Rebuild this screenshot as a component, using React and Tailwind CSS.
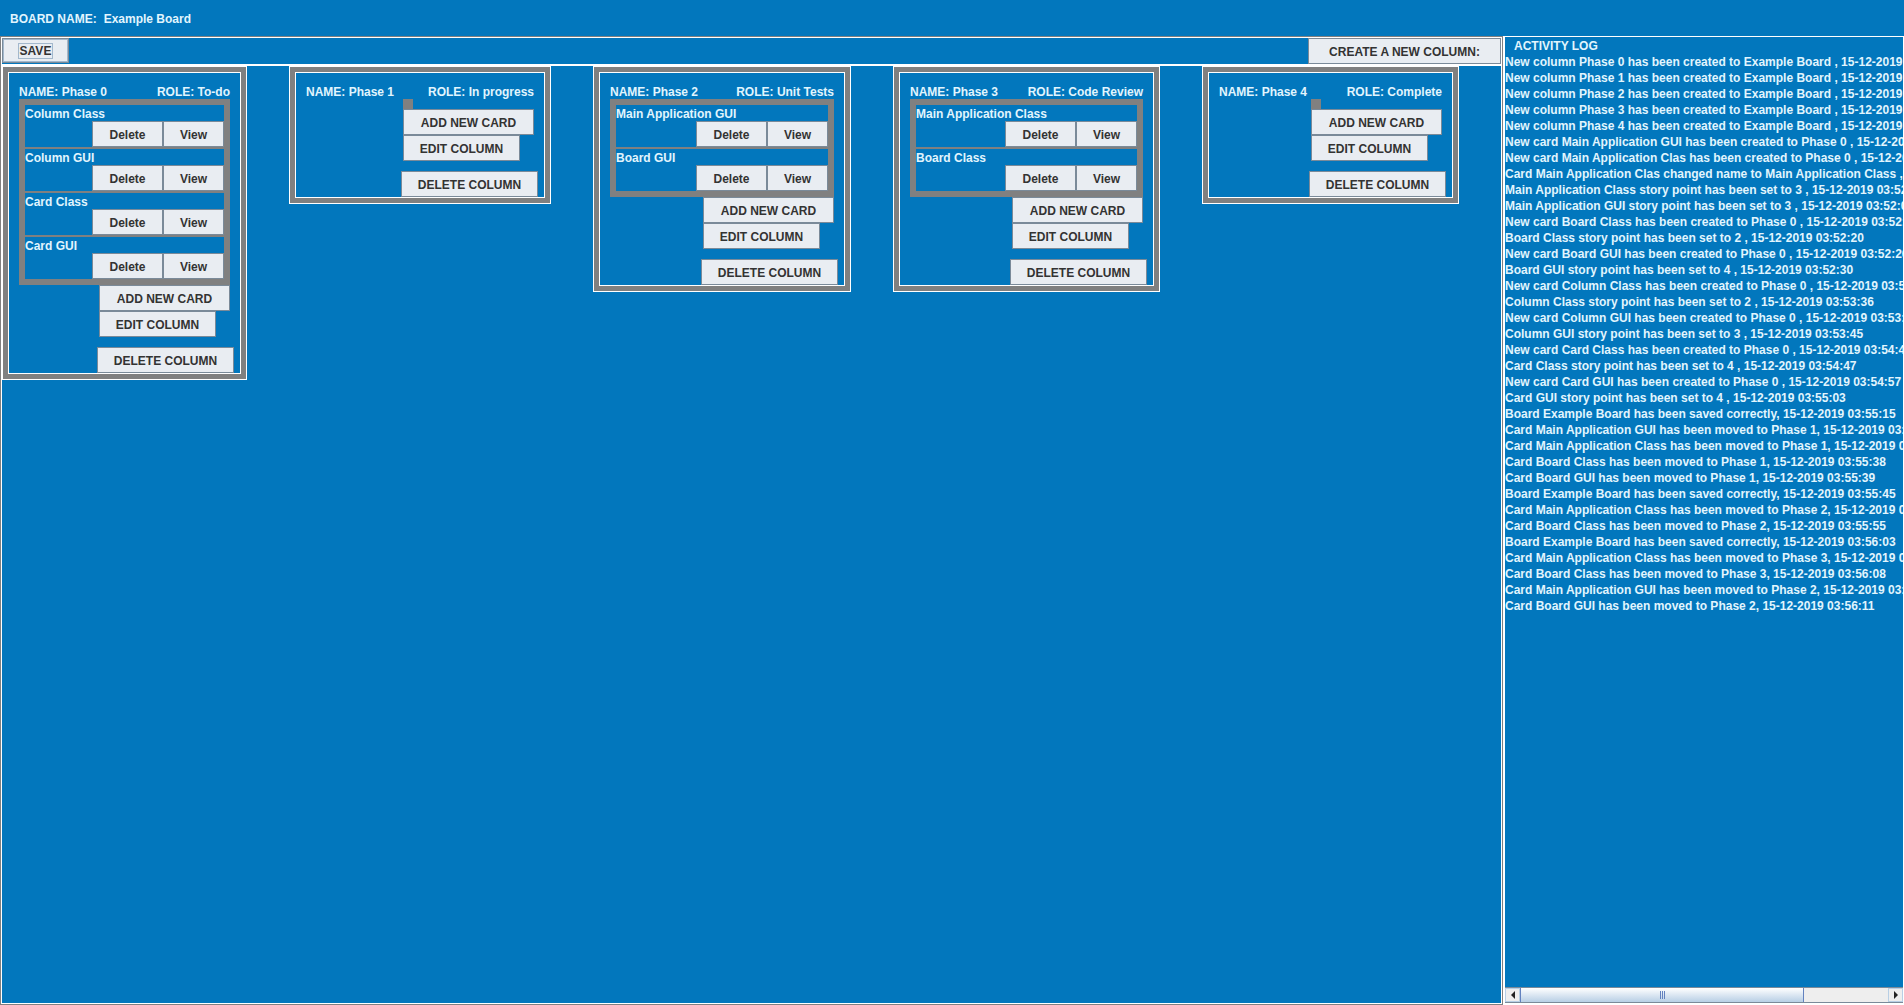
const FONT = "font-['Liberation_Sans',Arial,sans-serif]";

const columns = [
  { name: 'Phase 0', role: 'To-do', width: 'w-[245px]', cards: ['Column Class', 'Column GUI', 'Card Class', 'Card GUI'] },
  { name: 'Phase 1', role: 'In progress', width: 'w-[262px]', cards: [] },
  { name: 'Phase 2', role: 'Unit Tests', width: 'w-[258px]', cards: ['Main Application GUI', 'Board GUI'] },
  { name: 'Phase 3', role: 'Code Review', width: 'w-[267px]', cards: ['Main Application Class', 'Board Class'] },
  { name: 'Phase 4', role: 'Complete', width: 'w-[257px]', cards: [] },
];

const log = [
  'New column Phase 0 has been created to Example Board , 15-12-2019 03:50:12',
  'New column Phase 1 has been created to Example Board , 15-12-2019 03:50:24',
  'New column Phase 2 has been created to Example Board , 15-12-2019 03:50:41',
  'New column Phase 3 has been created to Example Board , 15-12-2019 03:50:58',
  'New column Phase 4 has been created to Example Board , 15-12-2019 03:51:10',
  'New card Main Application GUI has been created to Phase 0 , 15-12-2019 03:51:25',
  'New card Main Application Clas has been created to Phase 0 , 15-12-2019 03:51:40',
  'Card Main Application Clas changed name to Main Application Class , 15-12-2019 03:51:52',
  'Main Application Class story point has been set to 3 , 15-12-2019 03:52:01',
  'Main Application GUI story point has been set to 3 , 15-12-2019 03:52:07',
  'New card Board Class has been created to Phase 0 , 15-12-2019 03:52:16',
  'Board Class story point has been set to 2 , 15-12-2019 03:52:20',
  'New card Board GUI has been created to Phase 0 , 15-12-2019 03:52:26',
  'Board GUI story point has been set to 4 , 15-12-2019 03:52:30',
  'New card Column Class has been created to Phase 0 , 15-12-2019 03:53:30',
  'Column Class story point has been set to 2 , 15-12-2019 03:53:36',
  'New card Column GUI has been created to Phase 0 , 15-12-2019 03:53:41',
  'Column GUI story point has been set to 3 , 15-12-2019 03:53:45',
  'New card Card Class has been created to Phase 0 , 15-12-2019 03:54:42',
  'Card Class story point has been set to 4 , 15-12-2019 03:54:47',
  'New card Card GUI has been created to Phase 0 , 15-12-2019 03:54:57',
  'Card GUI story point has been set to 4 , 15-12-2019 03:55:03',
  'Board Example Board has been saved correctly, 15-12-2019 03:55:15',
  'Card Main Application GUI has been moved to Phase 1, 15-12-2019 03:55:34',
  'Card Main Application Class has been moved to Phase 1, 15-12-2019 03:55:36',
  'Card Board Class has been moved to Phase 1, 15-12-2019 03:55:38',
  'Card Board GUI has been moved to Phase 1, 15-12-2019 03:55:39',
  'Board Example Board has been saved correctly, 15-12-2019 03:55:45',
  'Card Main Application Class has been moved to Phase 2, 15-12-2019 03:55:53',
  'Card Board Class has been moved to Phase 2, 15-12-2019 03:55:55',
  'Board Example Board has been saved correctly, 15-12-2019 03:56:03',
  'Card Main Application Class has been moved to Phase 3, 15-12-2019 03:56:06',
  'Card Board Class has been moved to Phase 3, 15-12-2019 03:56:08',
  'Card Main Application GUI has been moved to Phase 2, 15-12-2019 03:56:10',
  'Card Board GUI has been moved to Phase 2, 15-12-2019 03:56:11',
];

function Button({ className, children }) {
  return (
    <button
      type="button"
      className={`h-[26px] shrink-0 whitespace-nowrap border border-[#7a8a99] bg-[#e9edf2] pt-[2px] text-center text-[#333333] ${className}`}
    >
      {children}
    </button>
  );
}

function Card({ title }) {
  return (
    <article className="bg-[#0277bd]">
      <h3 className="h-4 leading-[18px]">{title}</h3>
      <div className="flex justify-end">
        <Button className="w-[71px]">Delete</Button>
        <Button className="w-[61px]">View</Button>
      </div>
    </article>
  );
}

function Column({ column }) {
  return (
    <section className={`shrink-0 border border-white bg-[#808080] p-[5px] ${column.width}`}>
      <div className="border border-white bg-[#0277bd] px-[10px] pt-[10px]">
        <header className="flex h-4 justify-between leading-[18px] whitespace-nowrap">
          <h2>NAME: {column.name}</h2>
          <span>ROLE: {column.role}</span>
        </header>
        {column.cards.length > 0 && (
          <div className="flex flex-col gap-[2px] bg-[#808080] p-[6px]">
            {column.cards.map((title) => (
              <Card key={title} title={title} />
            ))}
          </div>
        )}
        <div className="ml-auto flex w-[131px] flex-col items-start">
          {column.cards.length === 0 && <div className="size-[10px] bg-[#808080]" />}
          <Button className="w-[131px]">ADD NEW CARD</Button>
          <Button className="w-[117px]">EDIT COLUMN</Button>
          <Button className="-ml-[2px] mt-[10px] w-[137px]">DELETE COLUMN</Button>
        </div>
      </div>
    </section>
  );
}

function ScrollArrow({ label, points }) {
  return (
    <button type="button" aria-label={label} className="flex w-[15px] shrink-0 items-center justify-center border border-[#b8cfe5] bg-[#eeeeee]">
      <svg viewBox="0 0 4 8" className="h-2 w-1" fill="#222222">
        <polygon points={points} />
      </svg>
    </button>
  );
}

export default function App() {
  return (
    <div className={`flex h-screen flex-col overflow-hidden bg-[#0277bd] text-[12px] leading-[16px] font-bold text-[#e1f5fe] ${FONT}`}>
      <header className="flex h-9 shrink-0 items-center gap-[7px] px-[10px] pt-[2px] whitespace-nowrap">
        <span>BOARD NAME:</span>
        <h1>Example Board</h1>
      </header>
      <div className="flex min-h-0 flex-1">
        <main className="flex min-w-0 flex-1 flex-col border border-[#808080]">
          <div className="flex min-h-0 flex-1 flex-col border border-white">
            <div className="flex shrink-0 items-start justify-between border-b-2 border-white">
              <button type="button" className="h-[25px] w-[67px] border border-[#7a8a99] bg-[#e9edf2] text-[#333333] inset-ring inset-ring-[#a3b8cc]">
                <span className="border border-[#a3b8cc] px-px">SAVE</span>
              </button>
              <Button className="w-[193px]">CREATE A NEW COLUMN:</Button>
            </div>
            <div className="flex min-h-0 flex-1 items-start gap-[42px] overflow-hidden">
              {columns.map((column) => (
                <Column key={column.name} column={column} />
              ))}
            </div>
          </div>
        </main>
        <aside className="flex w-[401px] shrink-0 flex-col border border-b-2 border-l-2 border-white">
          <h2 className="pt-px pl-[9px]">ACTIVITY LOG</h2>
          <ul className="min-h-0 flex-1 overflow-hidden whitespace-nowrap">
            {log.map((entry) => (
              <li key={entry}>{entry}</li>
            ))}
          </ul>
          <div className="flex h-[16px] shrink-0 border-y border-[#7a8a99] bg-[#eeeeee]">
            <ScrollArrow label="Scroll left" points="4,0 4,8 0,4" />
            <div className="flex min-w-0 flex-1">
              <div className="flex w-[284px] items-center justify-center gap-px border-x border-[#6382bf] bg-linear-to-b from-white to-[#b8cfe5]">
                <span className="h-2 w-px bg-[#6382bf]" />
                <span className="h-2 w-px bg-[#6382bf]" />
                <span className="h-2 w-px bg-[#6382bf]" />
              </div>
            </div>
            <ScrollArrow label="Scroll right" points="0,0 0,8 4,4" />
          </div>
        </aside>
      </div>
    </div>
  );
}
